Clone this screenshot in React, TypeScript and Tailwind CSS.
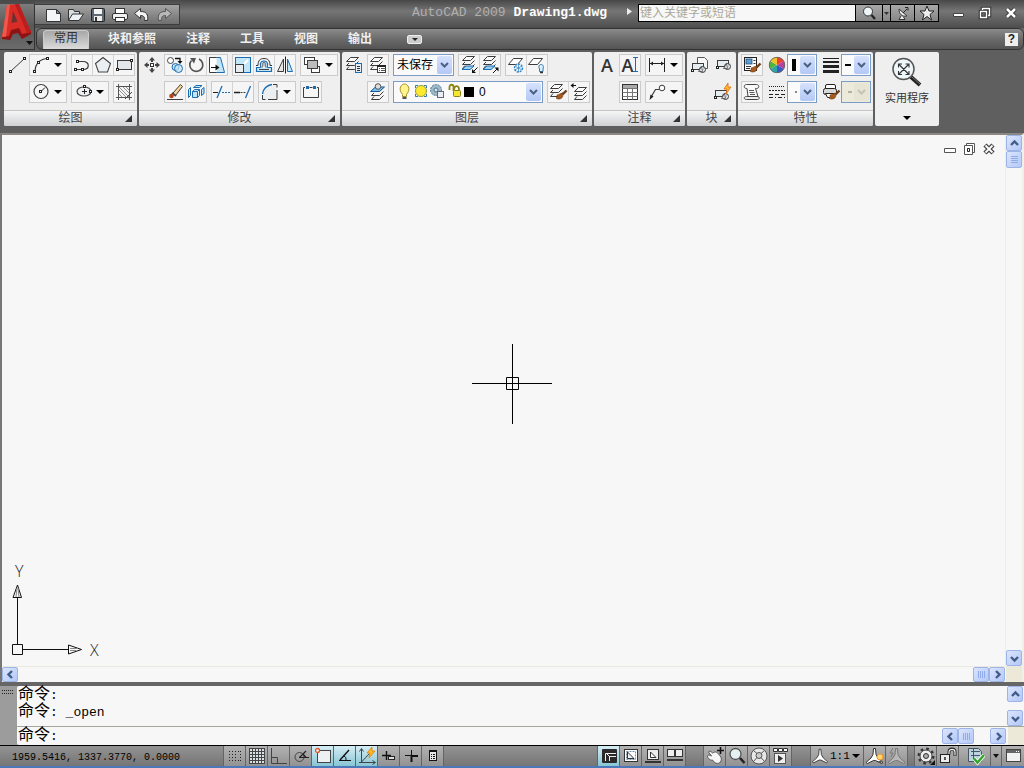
import React from 'react';
import clsx from 'clsx';

const D = '#3c3c3c';
const B = '#1c6cb4';
const L = '#c3e6f7';

/* All ribbon drawings share a 20x20 box */
const Sheets = ({ x = 2, y = 2 }: { x?: number; y?: number }) => (
  <g transform={`translate(${x} ${y})`} fill="#fafafa" stroke={D} strokeWidth="1">
    <path d="M3 9.500L.5 12.500h8l4-4" fill="none" />
    <path d="M3 6L.5 8.500h8l4-4" fill="none" />
    <path d="M.5 4.500h8l4-4h-8z" />
  </g>
);

const Node = ({ x, y }: { x: number; y: number }) => (
  <rect x={Math.floor(x) - 0.5} y={Math.floor(y) - 0.5} width="2" height="2" fill="#fff" stroke="#222" strokeWidth="1" />
);

const Brush = () => (
  <>
    <path d="M18.500 8.500l-4 4" stroke="#6b3f1c" strokeWidth="2.400" />
    <path d="M9 13c2 0 3-2 5-1.500c1.500 1.500 1 4-1 5-2 1-4 .5-5-.5 1.500-.5 1-2 1-3z" fill="#a8591d" stroke="#6b3a10" strokeWidth=".6" />
  </>
);

const BlockShape = ({ x, y }: { x: number; y: number }) => (
  <g transform={`translate(${x} ${y})`} stroke={D} fill="#e6edf0">
    <rect x="1.500" y=".5" width="11" height="6" />
    <circle cx="11.500" cy="6.500" r="3" fill="#dde6ea" fillOpacity=".85" />
    <path d="M10.500 3.500L7.500 8.500h4z" fill="#fff" fillOpacity=".5" strokeWidth=".7" />
    <Node x={1.5} y={7} />
  </g>
);

const icons: Record<string, React.ReactNode> = {
  line: <><path d="M4 16L17 4" stroke={D} /><Node x={3} y={16} /><Node x={17} y={3} /></>,
  arc: <><path d="M5 16C5.500 9 9 4 18 3.500" stroke={D} strokeWidth="1.200" /><Node x={4} y={16} /><Node x={8} y={7} /><Node x={17} y={3} /></>,
  polyline: <><path d="M3 14.500h8c7 0 7-8 0-8H6" stroke={D} strokeWidth="1.200" /><Node x={3} y={14} /><Node x={10} y={14} /><Node x={5} y={6} /></>,
  polygon: <path d="M10 2.500l7.500 6-3 8.500h-9l-3-8.500z" fill="#eceff2" stroke="#444" strokeWidth="1.100" />,
  rect: <><rect x="3.500" y="5.500" width="14" height="9" fill="#e4e7ea" stroke={D} /><Node x={3} y={14} /><Node x={17} y={5} /></>,
  circle: <><circle cx="11" cy="9.500" r="7" fill="#f6f6f6" stroke="#444" strokeWidth="1.200" /><path d="M11 9.500L15 5.500" stroke="#222" /><Node x={10} y={9} /></>,
  ellipse: <><ellipse cx="12" cy="9.500" rx="7" ry="4.500" fill="#eef0f2" stroke="#444" strokeWidth="1.200" /><path d="M12.500 7v5M10 9.500h5" stroke="#222" /><Node x={18} y={9} /><Node x={12} y={4} /></>,
  hatch: <><path d="M4.500 2v16M15.500 2v16M2 4.500h16M2 15.500h16" stroke="#555" /><path d="M5 8l7 7M5 12l3 3M5 5l10 10M9 5l6 6M12 5l3 3" stroke="#777" strokeWidth=".8" /><path d="M11 17l7-7" stroke="#444" /></>,
  move: <g fill="#444"><path d="M10 2l3 3.500H7zM10 18l3-3.500H7zM2 10l3.500-3v6zM18 10l-3.500-3v6z" /><path d="M9 5h2v2H9zM9 13h2v2H9zM5 9h2v2H5zM13 9h2v2h-2z" /><rect x="8.500" y="8.500" width="3" height="3" fill="#fff" stroke="#333" /></g>,
  copy: <><circle cx="5.500" cy="5.500" r="3" fill="#fff" stroke="#444" /><path d="M10 3.500h5v4" stroke="#111" strokeWidth="1.300" /><path d="M12.500 6h5L15 9z" fill="#111" /><circle cx="10.500" cy="12" r="3.500" fill={L} stroke={B} /><circle cx="13.500" cy="13.500" r="4" fill={L} fillOpacity=".7" stroke={B} /></>,
  rotate: <><path d="M5.500 5.500a6.500 6.500 0 1 0 7.500-1.500" stroke="#555" strokeWidth="1.700" /><path d="M4 3h6l-2 5.500z" fill="#555" /></>,
  stretch: <><path d="M8 2.500h5.500l4 15H8z" fill={L} stroke={B} /><path d="M9.500 2.500h-7v15h7" fill="#fff" stroke={D} /><path d="M4 12.500h6" stroke="#111" /><path d="M8.500 9.500l4 3-4 3z" fill="#111" /></>,
  scale: <><rect x="2.500" y="2.500" width="15" height="15" fill={L} stroke={B} /><rect x="2.500" y="9.500" width="8" height="8" fill="#e9ecee" stroke={D} /><path d="M11 9l4-4" stroke="#fff" strokeWidth="2" /></>,
  offset: <><path d="M2.500 16.500h15v-4h-3.500c-1 0-.8-1-.5-2 1.500-6-8.500-6-7 0 .3 1 .5 2-.5 2H2.500z" fill={L} stroke={B} strokeWidth="1.200" /><path d="M5 14.500h10M8 12.500c1.500-1 .5-3.500 1-4.500.5-1 1.500-1 2 0 .5 1-.5 3.500 1 4.500" fill="#fff" stroke="#444" /><path d="M2 10.500h2c0-5 2-7 6-7s6 2 6 7h2" stroke="#333" /></>,
  mirror: <><path d="M8.500 4v12.500h-6z" fill="#e6e6e6" stroke={D} /><path d="M12.500 4v12.500h5z" fill={L} stroke={B} /><path d="M10.500 1.500v17" stroke="#222" /></>,
  order: <><rect x="3.500" y="2.500" width="10" height="7" fill="#fff" stroke={D} /><rect x="10.500" y="11.500" width="8" height="6" fill="#fff" stroke={D} /><rect x="6.500" y="5.500" width="10" height="8" fill="#bcbcbc" stroke={D} /></>,
  erase: <><path d="M2 17.500h16" stroke={D} /><path d="M8 11l7.500-8.500 2 2L10.500 13.500z" fill="#f2d5a5" stroke="#4d3a28" /><path d="M7 11l4 3" stroke="#444" strokeWidth="2" /><circle cx="6.500" cy="14" r="2.300" fill="#b5431e" /></>,
  explode: <g fill={L} stroke={B} strokeWidth="1"><path d="M2.500 7.500l2-2v8l-2 2zM7.500 5.500l2.500-2h6l-2.500 2zM15.500 7.500l2.500-2v6l-2.500 2z" /><path d="M6.500 9.500h5v6h-5zM6.500 9.500l2-2h5l-2 2M11.500 15.500l2-2v-6" /></g>,
  trim: <><path d="M1 10.500h5" stroke="#222" strokeWidth="1.200" /><path d="M5 16L10 4" stroke={B} strokeWidth="1.300" /><path d="M10 10.500h9" stroke={B} strokeWidth="1.200" strokeDasharray="2 1" /></>,
  extend: <><path d="M1 10.500h6" stroke="#222" strokeWidth="1.300" /><path d="M7.500 10.500h6" stroke={D} strokeDasharray="2 1" /><path d="M12.500 16l5-12" stroke={B} strokeWidth="1.300" /></>,
  fillet: <><path d="M3.500 17.500V13C4 7 8 3 14 2.500h4v15z" fill="#eceff1" /><path d="M3.500 12C4 7 8 3 13 2.500" stroke={B} strokeWidth="1.400" /><path d="M3.500 13v4.500h3M14 2.500h4v3M9 17.500h9V8" stroke={D} /></>,
  brk: <><path d="M4 5.500H2.500v10h15v-10H16M8.500 5.500h3" stroke={D} /><rect x="5" y="4" width="3" height="3" fill={B} /><rect x="12" y="4" width="3" height="3" fill={B} /></>,
  layerProps: <><Sheets x={1} y={2} /><rect x="10.500" y="8.500" width="6" height="9" fill="#e3f0fa" stroke={B} /><path d="M12 11.500h3M12 13.500h3M12 15.500h3" stroke="#333" /></>,
  layerStates: <><Sheets x={2} y={2} /><rect x="9.500" y="10.500" width="8" height="7" fill="#fff" stroke={D} /><path d="M9 11h9" stroke="#222" strokeWidth="2" /><path d="M11 13.500h1M13 13.500h4M11 15.500h1M13 15.500h4" stroke="#555" /></>,
  layerIso: <><Sheets x={3} y={1} /><path d="M3 14.500h8l4-3.500H7z" fill="#9bd0f2" stroke={B} /><path d="M18.500 12.500l-4 4" stroke="#111" /><path d="M13 14v4h4z" fill="#111" /></>,
  layerUniso: <><Sheets x={3} y={1} /><path d="M3 14.500h8l4-3.500H7z" fill="#9bd0f2" stroke={B} /><path d="M13 18l4-4" stroke="#111" /><path d="M18.500 12.500h-4l4 4z" fill="#111" /></>,
  layerFreeze: <><path d="M2.500 9.500h9l5-6h-9z" fill="#fff" stroke={D} /><circle cx="12.500" cy="13" r="4" fill="#eaf6fd" stroke="#3183c5" strokeWidth="1.400" strokeDasharray="2 1" /><path d="M12.500 9v8M9 11l7 4M16 11l-7 4" stroke="#3183c5" strokeWidth=".7" /></>,
  layerOff: <><path d="M1.500 9.500h9l5-6h-9z" fill="#fff" stroke={D} /><path d="M12.500 14c-3-6 6-6 3.500 0v2.500h-3.500z" fill="#d8effc" stroke="#3778ad" /><path d="M13 17.500h3" stroke="#333" strokeWidth="1.300" /></>,
  layerCurrent: <><Sheets x={3} y={5} /><path d="M2.500 9.500h9l5-4.500h-9z" fill="#7cc0ee" stroke="#175a94" /><circle cx="10" cy="4.500" r="2.800" fill="#dcdcdc" stroke="#555" /></>,
  layerMatch: <><Sheets x={2} y={2} /><Brush /></>,
  layerPrev: <><Sheets x={5} y={5} /><path d="M2 3.500h5" stroke="#111" /><path d="M4.500 1v5L1.500 3.500z" fill="#111" /></>,
  dimLinear: <><path d="M3.500 3v14M18.500 3v14" stroke="#222" /><path d="M4 8.500h14" stroke="#222" /><path d="M4 8.500l3-2v4zM18 8.500l-3-2v4z" fill="#222" /></>,
  table: <><rect x="2.500" y="2.500" width="15" height="15" fill="#fff" stroke="#333" /><path d="M3 3h14v3H3z" fill="#aaa" /><path d="M2.500 6.500h15M2.500 10.500h15M2.500 14.500h15M7.500 7v10.500M12.500 7v10.500" stroke="#777" /></>,
  leader: <><path d="M5 15l4.500-7.500h4" stroke={D} strokeWidth="1.200" /><circle cx="16" cy="6" r="2.800" fill="#fff" stroke={D} /><path d="M3.500 18l1-5.500 3 2z" fill="#222" /></>,
  insertBlock: <><path d="M7.500 8.500v-6h7l3 3v8h-10z" fill="#f5f7f8" stroke="#555" /><BlockShape x={1} y={8} /></>,
  createBlock: <BlockShape x={3} y={5} />,
  editBlock: <><BlockShape x={1} y={8} /><path d="M15 1l-4 6h3l-1 5 5-7h-3z" fill="#ffbd27" stroke="#d9690f" strokeWidth=".8" /></>,
  matchProps: <><rect x="2.500" y="2.500" width="12" height="13" fill="#fff" stroke="#222" /><rect x="4" y="4" width="6" height="5" fill="#5c9ed0" stroke="#1f4d7a" strokeWidth=".8" /><path d="M11.500 5.500h2M11.500 8.500h2M4 11.500h5M4 13.500h4" stroke="#333" /><Brush /></>,
  list: <><path d="M4.500 2.500h10c3 0 3 4 0 4h-1l2.500 8H6L5 6.500H4.500c-3 0-3-4 0-4z" fill="#fafafa" stroke="#444" /><path d="M4.500 14.500H15c3 0 3 3 .5 3h-11c-3 0-3-3 0-3z" fill="#eee" stroke="#444" /><path d="M7 8.500h5M7.500 10.500h5M8 12.500h5" stroke="#555" /></>,
  linetypes: <g stroke="#222"><path d="M2 4.500h16" strokeDasharray="1 1" /><path d="M2 8.500h16" strokeDasharray="2 1" /><path d="M2 12.500h16" strokeDasharray="4 2" /><path d="M2 15.500h16" strokeDasharray="4 2 1 2" /></g>,
  lineweights: <g fill="#222"><rect x="2" y="3" width="16" height="1" /><rect x="2" y="6" width="16" height="2" /><rect x="2" y="10" width="16" height="3" /><rect x="2" y="15" width="16" height="3" /></g>,
  plotStyle: <><rect x="4.500" y="2.500" width="10" height="5" rx="1.500" fill="#fff" stroke="#222" /><rect x="2.500" y="6.500" width="13" height="6" rx="2" fill="#d8d8d8" stroke="#222" /><path d="M4.500 11.500h9v4h-7z" fill="#fff" stroke="#222" /><Brush /></>,
  color: (
    <>
      {['#f0402d', '#b93f9f', '#3957c4', '#2da7a6', '#53b43c', '#f3c12c'].map((c, i) => (
        <path key={c} d="M10 10L10 2A8 8 0 0 1 16.930 6z" fill={c} transform={`rotate(${i * 60} 10 10)`} />
      ))}
      <circle cx="10" cy="10" r="7.700" stroke="#666" strokeWidth=".9" />
    </>
  ),
};

function Icon({ name }: { name: string }) {
  return <svg width="20" height="20" viewBox="0 0 20 20" fill="none" className="shrink-0">{icons[name]}</svg>;
}

const Down = ({ className }: { className?: string }) => (
  <svg width="8" height="4" viewBox="0 0 8 4" className={clsx('shrink-0', className)}><path d="M0 0h8L4 4z" fill="currentColor" /></svg>
);

const LetterA = () => <span className="font-['Open_Sans',sans-serif] text-lg leading-5 font-semibold text-[#333]">A</span>;

function Tool({ name, label, className }: { name: string; label: string; className?: string }) {
  return (
    <button aria-label={label} className={clsx('box-content flex h-5 w-5 shrink-0 items-center justify-center', className)}>
      {name === 'mtext' ? (
        <>
          <LetterA />
          <svg width="5" height="16" className="shrink-0"><path d="M0 .5h5M0 14.500h5M2.500 1v13" stroke="#1c6cb4" /></svg>
        </>
      ) : <Icon name={name} />}
    </button>
  );
}

/* Framed set of buttons, optionally ending in a drop-down arrow */
function Group({ items, drop }: { items: [string, string][]; drop?: boolean }) {
  return (
    <div className={clsx('flex h-[22px] shrink-0 border border-[#cbcbcb] bg-[#f5f5f5]', !drop && 'divide-x divide-[#d4d4d4]')}>
      {items.map(([name, label]) => <Tool key={name} name={name} label={label} />)}
      {drop && (
        <button aria-label="更多" className="flex w-4 items-center justify-center text-black"><Down /></button>
      )}
    </div>
  );
}

function Select({ label, value, children, className, disabled }: {
  label: string; value: string; children?: React.ReactNode; className: string; disabled?: boolean;
}) {
  return (
    <div className={clsx('relative flex h-[22px] shrink-0 items-center border border-[#7a9cc6]', disabled ? 'bg-[#eceada]' : 'bg-[#fafafa]', className)}>
      {children}
      <select aria-label={label} disabled={disabled} defaultValue={value} className="h-full min-w-0 flex-1 appearance-none bg-transparent pl-[3px] text-xs text-black outline-none disabled:text-[#999]">
        <option>{value}</option>
      </select>
      <span className={clsx('pointer-events-none absolute inset-y-px right-px flex w-[15px] items-center justify-center rounded-xs', disabled ? 'bg-[#e6e4d3] text-[#c5c3b4]' : 'bg-linear-to-b from-[#d6e2fc] to-[#b3c8f6] text-[#4a6184]')}>
        <svg width="9" height="6" viewBox="0 0 9 6"><path d="M1 1l3.500 3.500L8 1" stroke="currentColor" strokeWidth="2" fill="none" /></svg>
      </span>
    </div>
  );
}

function Panel({ title, corner = true, className, children }: { title: string; corner?: boolean; className: string; children: React.ReactNode }) {
  return (
    <section className={clsx('flex shrink-0 flex-col overflow-hidden rounded-xs bg-[#efefef]', className)}>
      <div className="flex flex-1 flex-col gap-[5px] pt-0.5">{children}</div>
      <h2 className="relative h-4 border-t border-[#c4c4c4] bg-linear-to-b from-[#f6f6f6] to-[#cfd1d3] text-center text-xs leading-[15px] text-[#444]">
        {title}
        {corner && <svg width="7" height="7" className="absolute right-[5px] bottom-1"><path d="M7 0v7H0z" fill="#333" /></svg>}
      </h2>
    </section>
  );
}

const Row = ({ className, children }: { className?: string; children: React.ReactNode }) => (
  <div className={clsx('flex h-[22px] items-center', className)}>{children}</div>
);

function ScrollButton({ dir, className }: { dir: 'up' | 'down' | 'left' | 'right' | 'v' | 'h'; className?: string }) {
  const paths = { up: 'M4 9l3.500-3.500L11 9', down: 'M4 6l3.500 3.500L11 6', left: 'M9 4L5.500 7.500 9 11', right: 'M6 4l3.500 3.500L6 11', v: 'M4 4.500h7M4 6.500h7M4 8.500h7M4 10.500h7', h: 'M4.500 4v7M6.500 4v7M8.500 4v7M10.500 4v7' };
  const grip = dir === 'v' || dir === 'h';
  return (
    <button aria-label={dir} className={clsx('flex size-4 shrink-0 items-center justify-center rounded-xs border border-[#9db5e6] bg-linear-to-br from-[#dbe5fd] to-[#b4c8f7]', className)}>
      <svg width="15" height="15" viewBox="0 0 15 15" className="shrink-0"><path d={paths[dir]} fill="none" stroke={grip ? '#8fabea' : '#435d89'} strokeWidth={grip ? 1 : 2.4} /></svg>
    </button>
  );
}

const quick: [string, React.ReactNode][] = [
  ['新建', <path d="M1.500 3.500h10l4 4v8h-14zM11.500 3.500v4h4" fill="#f4f6f8" stroke="#333" />],
  ['打开', <><path d="M1.500 14V3.500h5l1 2h5v3" fill="#d6dce0" stroke="#333" /><path d="M1.500 14.500l4-6.500h11l-4.500 6.500z" fill="#eef2f4" stroke="#333" /></>],
  ['保存', <><rect x="2.500" y="2.500" width="13" height="13" rx="1" fill="#5d6872" stroke="#222" /><rect x="5" y="3" width="8" height="5" fill="#f4f4f4" /><rect x="5" y="10" width="8" height="5" fill="#eee" /><path d="M7 11v4" stroke="#333" strokeWidth="2" /></>],
  ['打印', <><rect x="4.500" y="2.500" width="9" height="5" fill="#fff" stroke="#333" /><rect x="1.500" y="7.500" width="15" height="6" rx="1.500" fill="#f1f1f1" stroke="#333" /><rect x="4.500" y="11.500" width="9" height="4" fill="#fff" stroke="#333" /></>],
  ['放弃', <path d="M1.500 7.500l6-5v3c6 0 8 3 7 9h-3c.5-3-.5-5-4-5v3z" fill="#f4f4f4" stroke="#333" />],
  ['重做', <path d="M16.500 7.500l-6-5v3c-6 0-8 3-7 9h3c-.5-3 .5-5 4-5v3z" fill="#b9b9b9" stroke="#555" />],
];

const toggles: [string, boolean, React.ReactNode][] = [
  ['捕捉模式', false, <path d="M4 5.500h10M4 8.500h7M4 11.500h7M4 14.500h10M15.500 5v10" stroke="#222" strokeDasharray="1 2" />],
  ['栅格显示', false, <><rect x="2.500" y="2.500" width="15" height="15" fill="#dce0e6" /><path d="M2.500 2v16M5.500 2v16M8.500 2v16M11.500 2v16M14.500 2v16M17.500 2v16M2 2.500h16M2 5.500h16M2 8.500h16M2 11.500h16M2 14.500h16M2 17.500h16" stroke="#444" /></>],
  ['正交模式', false, <path d="M2.500 2v15.500H18M2.500 11.500h6v6" stroke="#444" />],
  ['极轴追踪', false, <><circle cx="8.500" cy="11" r="4.500" stroke="#444" /><path d="M8.500 11.500L15 5M8 11.500h10M12 8l3 3.500" stroke="#222" strokeWidth="1.200" /></>],
  ['对象捕捉', true, <><rect x="4.500" y="4.500" width="13" height="12" fill="#eef1f3" stroke="#444" /><circle cx="4.500" cy="4.500" r="2" fill="#fff" stroke="#e65220" strokeWidth="1.300" /></>],
  ['对象追踪', true, <><path d="M4 14.500h12" stroke="#111" /><path d="M5 14L14 4" stroke="#111" strokeWidth="1.400" /><path d="M9 10c2 1 2 2 2 4.500" stroke="#111" /></>],
  ['动态UCS', true, <><path d="M4.500 3v14M2 16.500h16M4.500 16L12 8M2.500 5.500l2-3 2 3M15.500 14.500l3 2-3 2" stroke="#444" /><path d="M15 1l-5 6h3l-1 5 6-7h-3z" fill="#ffb91f" stroke="#e27c0c" strokeWidth=".8" /></>],
  ['动态输入', false, <><path d="M3 9.500h9M7.500 5v9" stroke="#111" strokeWidth="1.400" /><rect x="9.500" y="10.500" width="6" height="3" fill="#ddd" stroke="#222" /></>],
  ['线宽', false, <><path d="M4 9.500h6M10.500 4v6" stroke="#111" /><path d="M10 10h7M10.500 9v7" stroke="#111" strokeWidth="2" /></>],
  ['快捷特性', false, <><rect x="6.500" y="4.500" width="7" height="10" fill="#e6e6e6" stroke="#111" /><path d="M6 5h8" stroke="#111" strokeWidth="2" /><path d="M8 8.500h1M10 8.500h2M8 10.500h1M10 10.500h2M8 12.500h1M10 12.500h2" stroke="#111" /></>],
];

const layouts: [string, boolean, React.ReactNode][] = [
  ['模型', true, <><rect x="3" y="3" width="15" height="14" rx="1" fill="#2a2a2a" /><path d="M6.500 15V7.500H17M10.500 15v-4.500H17M7 7l4 4" stroke="#eee" /></>],
  ['布局', false, <><rect x="3.500" y="3.500" width="13" height="12" fill="#fff" stroke="#333" /><rect x="5.500" y="5.500" width="9" height="8" stroke="#6e8fa9" strokeDasharray="2 1" /><path d="M6.500 6v6.500H13z" fill="#eee" stroke="#333" /></>],
  ['快速查看布局', false, <><rect x="4.500" y="3.500" width="11" height="10" fill="#eee" stroke="#333" /><path d="M7.500 6v5.500H13z" fill="#fff" stroke="#333" /><path d="M2 16h16" stroke="#333" strokeWidth="2" /></>],
  ['快速查看图形', false, <><rect x="2.500" y="3.500" width="7" height="7" fill="#eee" stroke="#333" /><rect x="10.500" y="3.500" width="7" height="7" fill="#eee" stroke="#333" /><path d="M2 14h16" stroke="#333" strokeWidth="2" /></>],
];

const navs: [string, boolean, React.ReactNode][] = [
  ['平移', false, <><path d="M2.500 10c1-2 3 0 4 0L3.500 6c1-1.500 2-1 4 1 2-1 4-2 6 1 3 3 4 6 1 9-3 1-5 0-7-3-2 1-5-2-5-4z" fill="#f6f6f6" stroke="#555" /><path d="M15.500 1v7M12 4.500h7" stroke="#111" strokeWidth="1.600" /></>],
  ['缩放', false, <><circle cx="8.500" cy="8" r="5.500" fill="#e6eff2" stroke="#555" strokeWidth="1.300" /><path d="M13 12l4.500 5" stroke="#222" strokeWidth="2.600" /></>],
  ['控制盘', false, <><circle cx="10" cy="10" r="8" fill="#e8e8e8" stroke="#555" /><circle cx="10" cy="9.500" r="3" fill="#ccc" stroke="#555" /><path d="M4.500 4.500L8 7.500M15.500 4.500L12 7.500M4.500 15.500l3.500-4M15.500 15.500l-3.500-4" stroke="#555" /></>],
  ['运动显示器', false, <><path d="M2.500 2.500h4v3h-4zM7.500 2.500h4v3h-4zM12.500 2.500h4v3h-4z" fill="#fff" stroke="#333" /><rect x="3.500" y="7.500" width="11" height="10" fill="#eee" stroke="#555" /><path d="M7 9v7l5-3.500z" fill="#333" /></>],
];

const Scale = ({ c = '#333', f = '#fff' }: { c?: string; f?: string }) => (
  <path d="M8.500 2.500h2l.5 6 2 3.500 5 4.500-1.500 1-6-3h-2l-6 3-1.500-1 5-4.500 2-3.500z" fill={f} stroke={c} />
);

function StatusButton({ label, on, width = 'w-[22px]', children }: { label: string; on?: boolean; width?: string; children: React.ReactNode }) {
  return (
    <button aria-label={label} aria-pressed={!!on} className={clsx('flex h-full shrink-0 items-center justify-center border-l border-[#646464]', on ? 'bg-linear-to-b from-[#d5edf4] to-[#87c5d5]' : 'bg-linear-to-b from-[#b2b2b2] to-[#929292]', width)}>
      <svg width="20" height="20" viewBox="0 0 20 20" fill="none" className="shrink-0">{children}</svg>
    </button>
  );
}

const StatusSet = ({ items }: { items: [string, boolean, React.ReactNode][] }) => (
  <div className="flex h-full shrink-0 border-r border-[#646464]">
    {items.map(([label, on, art]) => <StatusButton key={label} label={label} on={on}>{art}</StatusButton>)}
  </div>
);

const boxBtn = 'flex h-full shrink-0 items-center justify-center border-l border-black bg-linear-to-b from-[#a8a8a8] to-[#868686]';

function Header() {
  return (
    <header className="flex h-[50px] shrink-0 bg-linear-to-b from-[#494949] via-[#686868] to-[#5f5f5f]">
      <button aria-label="菜单浏览器" className="mt-1 w-[35px] shrink-0 border-r border-b border-[#333] bg-linear-to-b from-[#7c7c7c] via-[#585858] to-[#6b6b6b]">
        <svg width="34" height="45" viewBox="0 0 34 45">
          <path d="M2 31l7-1 2-5 9-2 3 6 8-3v4l-9 5-4-6-5 1-3 6-8-1z" fill="#8f1313" />
          <path d="M7 1l12-1 12 28-9 2-3-6-8 2-2 6-7 1z" fill="#d92c26" />
          <path d="M19 0l12 28-4 1L15 .5z" fill="#b81f1d" />
          <path d="M7 1l3-.5L6 32.500l-4 .5z" fill="#f0584c" />
          <path d="M13 7l-1.500 12 6-1.500z" fill="#6b3030" />
          <path d="M26 37h7l-3.500 4z" fill="#111" />
        </svg>
      </button>
      <div className="flex min-w-0 flex-1 flex-col">
        <div className="flex h-7 items-start bg-linear-to-b from-[#484848] via-[#767676] via-40% to-[#4d4d4d] pt-1">
          <nav aria-label="快速访问" className="flex h-[21px] w-[145px] shrink-0 items-center gap-1 border border-l-0 border-[#3d3d3d] bg-linear-to-b from-[#a4a4a4] to-[#6f6f6f] pl-2.5">
            {quick.map(([label, art]) => (
              <button key={label} aria-label={label}><svg width="18" height="18" viewBox="0 0 18 18">{art}</svg></button>
            ))}
          </nav>
          <h1 className="flex-1 pr-1.5 text-right font-['Liberation_Mono',monospace] text-[13px] leading-[18px] whitespace-pre text-[#b0b0b0]">
            AutoCAD 2009 <b className="text-white">Drawing1.dwg</b>
            <svg width="5" height="8" className="ml-5 inline-block align-baseline"><path d="M0 0v7l5-3.500z" fill="#eee" /></svg>
          </h1>
          <div className="flex h-[18px] w-[301px] shrink-0 border border-black bg-[#f7f7f7]">
            <input aria-label="搜索" placeholder="键入关键字或短语" className="min-w-0 flex-1 px-px text-xs placeholder:text-[#aaa99a] outline-none" />
            <button aria-label="查找" className={clsx(boxBtn, 'w-[27px]')}>
              <svg width="16" height="16" viewBox="0 0 16 16"><circle cx="7" cy="6.500" r="4.500" fill="#eef5f7" stroke="#333" /><path d="M10.500 10l3.500 4" stroke="#222" strokeWidth="2.200" /></svg>
            </button>
            <button aria-label="查找选项" className={clsx(boxBtn, 'w-2')}>
              <svg width="5" height="3"><path d="M0 0h5L2.500 3z" fill="#333" /></svg>
            </button>
            <button aria-label="通讯中心" className={clsx(boxBtn, 'w-6')}>
              <svg width="16" height="16" viewBox="0 0 16 16"><path d="M4 4c0 5 3 8 8 7zM6 11l-2 3.500h6L8.500 12" fill="#eee" stroke="#333" /><path d="M8 8l4-4M10 2.500h3v3" stroke="#222" fill="none" /></svg>
            </button>
            <button aria-label="收藏夹" className={clsx(boxBtn, 'w-6')}>
              <svg width="16" height="16" viewBox="0 0 16 16"><path d="M8 1l2 5h5l-4 3.500 1.500 5.500L8 11.500 3.500 15 5 9.500 1 6h5z" fill="#eee" stroke="#222" /></svg>
            </button>
          </div>
          <div className="ml-3 flex w-[73px] shrink-0 gap-2.5 pt-px">
            <button aria-label="最小化"><svg width="16" height="16"><path d="M2.500 8.500h10v3h-10z" fill="#fff" stroke="#444" /></svg></button>
            <button aria-label="还原"><svg width="16" height="16" fill="none"><path d="M5.500 5V3.500h7v7H11M3.500 6.500h6v6h-6z" stroke="#333" strokeWidth="3.500" /><path d="M5.500 5V3.500h7v7H11M3.500 6.500h6v6h-6z" stroke="#fff" strokeWidth="1.400" /></svg></button>
            <button aria-label="关闭"><svg width="16" height="16"><path d="M4 4l8 8M12 4l-8 8" stroke="#333" strokeWidth="4.500" /><path d="M4 4l8 8M12 4l-8 8" stroke="#fff" strokeWidth="2.500" /></svg></button>
          </div>
        </div>
        <nav aria-label="功能区" className="ml-px flex h-[22px] items-stretch rounded-md border border-[#333] bg-linear-to-b from-[#8b8b8b] via-[#6b6b6b] to-[#545454] pl-0.5 text-xs text-white">
          <button className="mx-1 mt-px rounded-t-sm border border-b-0 border-[#ccc] bg-linear-to-b from-[#a7a7a7] to-[#dcdcdc] px-2.5 pb-1 leading-[15px] text-[#333]">常用</button>
          {['块和参照', '注释', '工具', '视图', '输出'].map(t => (
            <button key={t} className="px-[15px] leading-[18px] font-bold text-[#f0f0f0]">{t}</button>
          ))}
          <button aria-label="最小化功能区" className="ml-5 flex h-[9px] w-[15px] items-center justify-center self-center rounded-xs border border-[#eee] bg-[#ccc]">
            <svg width="6" height="3"><path d="M0 0h6L3 3z" fill="#222" /></svg>
          </button>
          <button aria-label="帮助" className="mr-[5px] ml-auto h-[13px] w-[13px] self-center bg-[#eee] text-center font-['Liberation_Sans',sans-serif] text-xs leading-[13px] font-bold text-[#222]">?</button>
        </nav>
      </div>
    </header>
  );
}

function Ribbon() {
  return (
    <div className="flex h-[83px] shrink-0 items-start gap-0.5 bg-[#5f5f5f] pt-0.5 pl-1 [&>section]:h-[74px]">
      <Panel title="绘图" className="w-[133px]">
        <Row className="gap-1 pl-[3px]">
          <Tool name="line" label="直线" className="-mr-0.5" />
          <Group items={[['arc', '圆弧']]} drop />
          <Group items={[['polyline', '多段线'], ['polygon', '正多边形'], ['rect', '矩形']]} />
        </Row>
        <Row className="gap-1 pl-[25px]">
          <Group items={[['circle', '圆']]} drop />
          <Group items={[['ellipse', '椭圆']]} drop />
          <Group items={[['hatch', '图案填充']]} />
        </Row>
      </Panel>
      <Panel title="修改" className="w-[201px]">
        <Row className="gap-1 pl-[3px]">
          <Tool name="move" label="移动" className="-mr-0.5" />
          <Group items={[['copy', '复制'], ['rotate', '旋转'], ['stretch', '拉伸']]} />
          <Group items={[['scale', '缩放'], ['offset', '偏移'], ['mirror', '镜像']]} />
          <Group items={[['order', '绘图次序']]} drop />
        </Row>
        <Row className="gap-1 pl-[25px]">
          <Group items={[['erase', '删除'], ['explode', '分解']]} />
          <Group items={[['trim', '修剪'], ['extend', '延伸']]} />
          <Group items={[['fillet', '圆角']]} drop />
          <Group items={[['brk', '打断']]} />
        </Row>
      </Panel>
      <Panel title="图层" className="w-[250px]">
        <Row className="gap-1 pl-[3px]">
          <Tool name="layerProps" label="图层特性" className="-mr-0.5" />
          <Group items={[['layerStates', '图层状态']]} />
          <Select label="图层状态" value="未保存" className="w-[61px]" />
          <Group items={[['layerIso', '隔离'], ['layerUniso', '取消隔离']]} />
          <Group items={[['layerFreeze', '冻结'], ['layerOff', '关闭']]} />
        </Row>
        <Row className="gap-1 pl-[25px]">
          <Group items={[['layerCurrent', '置为当前']]} />
          <Select label="图层" value="0" className="w-[150px]">
            <svg width="82" height="20" viewBox="0 0 82 20" className="shrink-0" fill="none">
              <path d="M8.500 12.500c-5-6-1-10.500 2-10.500s7 4.500 2 10.500v2h-4z" fill="#fff58c" stroke="#a88d2c" />
              <path d="M8.500 16h4" stroke="#555" strokeWidth="2" />
              <path d="M21.500 6V3.500H24M30 3.500h2.500V6M32.500 12v2.500H30M24 14.500h-2.500V12" stroke="#3a76a8" />
              <circle cx="27" cy="9" r="5.500" fill="#ffe92e" stroke="#8f9c42" />
              <circle cx="42" cy="8" r="5.500" fill="#9db9c8" stroke="#55788e" strokeDasharray="2 1" />
              <circle cx="42" cy="8" r="2" fill="#d7e5ee" stroke="#55788e" />
              <rect x="43.500" y="9.500" width="6" height="6" fill="#e8eef2" stroke="#667" />
              <path d="M55.500 8V5c0-3 4-3 4 0v4M60 8c0-5 5-5 5-1v2" stroke="#8b8415" strokeWidth="1.800" />
              <rect x="59.500" y="8.500" width="7" height="6" rx="1" fill="#f4e733" stroke="#8b8415" />
              <rect x="70" y="5" width="10" height="10" fill="#000" />
            </svg>
          </Select>
          <Group items={[['layerMatch', '匹配'], ['layerPrev', '上一个']]} />
        </Row>
      </Panel>
      <Panel title="注释" className="w-[91px]">
        <Row className="gap-1 pl-[3px]">
          <button aria-label="单行文字" className="-mr-0.5 flex h-5 w-5 justify-center"><LetterA /></button>
          <Group items={[['mtext', '多行文字']]} />
          <Group items={[['dimLinear', '线性']]} drop />
        </Row>
        <Row className="gap-1 pl-[25px]">
          <Group items={[['table', '表格']]} />
          <Group items={[['leader', '多重引线']]} drop />
        </Row>
      </Panel>
      <Panel title="块" className="w-[49px]">
        <Row className="justify-between px-[3px]">
          <Tool name="insertBlock" label="插入" />
          <Tool name="createBlock" label="创建" />
        </Row>
        <Row className="justify-end px-[3px]">
          <Tool name="editBlock" label="编辑" />
        </Row>
      </Panel>
      <Panel title="特性" corner={false} className="w-[135px]">
        <Row className="gap-1 pl-[3px]">
          <Group items={[['matchProps', '特性匹配']]} />
          <Tool name="color" label="颜色" className="-mr-1" />
          <Select label="对象颜色" value="" className="w-[30px]"><i className="ml-1 h-3 w-1 shrink-0 bg-black" /></Select>
          <Tool name="lineweights" label="线宽" />
          <Select label="对象线宽" value="" className="-ml-1 w-[30px]"><i className="ml-[3px] h-0.5 w-1.5 shrink-0 bg-black" /></Select>
        </Row>
        <Row className="gap-1 pl-[3px]">
          <Group items={[['list', '列表']]} />
          <Tool name="linetypes" label="线型" className="-mr-1" />
          <Select label="对象线型" value="" className="w-[30px]"><i className="ml-[7px] size-0.5 shrink-0 bg-[#888]" /></Select>
          <Tool name="plotStyle" label="打印样式" />
          <Select label="对象打印样式" value="" disabled className="-ml-1 w-[30px]"><i className="ml-1.5 h-0.5 w-1 shrink-0 bg-[#b5b39f]" /></Select>
        </Row>
      </Panel>
      <button className="flex h-[74px] w-16 shrink-0 flex-col items-center rounded-xs bg-[#efefef] text-[11px] leading-4 text-[#333]">
        <svg width="32" height="32" viewBox="0 0 32 32" className="mt-1 mb-0.5 shrink-0" fill="none">
          <path d="M20 21l9 8" stroke="#222" strokeWidth="4" />
          <path d="M21 21l8 7" stroke="#777" />
          <circle cx="12.500" cy="13" r="10.500" fill="#f0f7fa" stroke="#555" strokeWidth="1.500" />
          <path d="M8 8.500l9.500 9.500M17.500 8.500L8 18M7.500 11.500v-3.500H11M14.500 8H18v3.500M18 15v3.500h-3.500M11 18.500H7.500V15" stroke="#333" strokeWidth="1.100" />
        </svg>
        实用程序
        <Down className="mt-2.5 text-black" />
      </button>
    </div>
  );
}

function Canvas() {
  return (
    <main className="flex min-h-0 flex-1 flex-col border-t-2 border-r-2 border-l-2 border-t-[#8a8785] border-r-[#f0f0ea] border-l-[#777] bg-[#f7f7f7]">
      <div className="flex min-h-0 flex-1">
        <div className="relative flex-1 overflow-hidden">
          <svg width="80" height="80" className="absolute top-[209px] left-[470px]" fill="none" stroke="#000">
            <path d="M40.500 0v80M0 39.500h80M34.500 33.500h12v12h-12z" />
          </svg>
          <svg width="120" height="108" viewBox="0 0 120 108" className="absolute bottom-0 left-1.5" fill="none" stroke="#111">
            <path d="M9.500 86V40M15 91.500h45M4.500 86.500h10v10h-10zM5 39.500L9.500 27l4 12.500zM60.500 87v9l13-4.500z" />
            <path d="M9 30l-1 9M10 30l1 9M62 90.500h8M62 92.500h6" stroke="#888" />
            <g fill="#222" stroke="none" className="font-['Open_Sans',sans-serif] text-base font-light">
              <text x="7" y="19">Y</text>
              <text x="82" y="98">X</text>
            </g>
          </svg>
          <div className="absolute top-[7px] right-2 flex gap-1">
            <button aria-label="最小化图形"><svg width="16" height="14"><path d="M3.500 6.500h11v4h-11z" fill="#fff" stroke="#555" /></svg></button>
            <button aria-label="还原图形"><svg width="16" height="14" fill="none" stroke="#555"><path d="M5.500 3.500v-2h8v9h-2M3.500 3.500h8v9h-8z" fill="#fff" /><path d="M6.500 6.500h2v3h-2z" stroke="#222" /></svg></button>
            <button aria-label="关闭图形"><svg width="16" height="14" fill="none"><path d="M4 3l8 8M12 3l-8 8" stroke="#444" strokeWidth="4.500" /><path d="M4.500 3.500l7 7M11.500 3.500l-7 7" stroke="#fff" strokeWidth="1.800" /></svg></button>
          </div>
        </div>
        <div className="flex w-[17px] flex-col border-l border-[#ececec]">
          <ScrollButton dir="up" />
          <ScrollButton dir="v" className="h-[17px]" />
          <ScrollButton dir="down" className="mt-auto" />
        </div>
      </div>
      <div className="flex h-4 border-t border-[#ece9e0]">
        <ScrollButton dir="left" className="h-[15px]" />
        <ScrollButton dir="h" className="ml-auto h-[15px]" />
        <ScrollButton dir="right" className="mr-px h-[15px]" />
        <div className="w-4 bg-[#ece9d8]" />
      </div>
    </main>
  );
}

const Prompt = () => <span className="text-base leading-[17px]">命令</span>;

function CommandLine() {
  return (
    <div className="flex h-[63px] shrink-0 border-t-4 border-[#666] bg-[#9c9c9c] font-['Liberation_Mono','Noto_Sans_CJK_SC',monospace] text-[13px] leading-[17px] text-black">
      <svg width="17" height="59" className="shrink-0"><path d="M2 4.500h12M2 7.500h12" stroke="#222" strokeDasharray="1 1" /></svg>
      <div className="flex flex-1 flex-col rounded-l-xs bg-[#f7f7f7]">
        <div className="flex h-[41px] border-b border-[#a5a59b]">
          <div className="flex-1 pt-px pl-px">
            <p className="h-[17px]"><Prompt />:</p>
            <p className="h-[17px]"><Prompt />: _open</p>
          </div>
          <div className="flex w-[17px] flex-col justify-between">
            <ScrollButton dir="up" />
            <ScrollButton dir="down" />
          </div>
        </div>
        <div className="flex flex-1 items-center">
          <label htmlFor="cmd" className="pt-px pl-px"><Prompt />:</label>
          <input id="cmd" className="ml-1 min-w-0 flex-1 outline-none" />
          <ScrollButton dir="left" />
          <ScrollButton dir="h" />
          <ScrollButton dir="right" className="mr-0.5 ml-4" />
          <div className="h-full w-4 bg-[#ece9d8]" />
        </div>
      </div>
    </div>
  );
}

function StatusBar() {
  return (
    <footer className="flex h-[23px] shrink-0 items-stretch border-t border-b-2 border-t-black border-b-[#4a78b8] bg-linear-to-b from-[#939393] to-[#757575]">
      <p className="w-[223px] shrink-0 pt-[3px] pl-3 font-['Liberation_Mono',monospace] text-[10px] leading-[18px] text-black">1959.5416, 1337.3770, 0.0000</p>
      <StatusSet items={toggles} />
      <div className="flex-1" />
      <StatusSet items={layouts} />
      <div className="w-[17px]" />
      <StatusSet items={navs} />
      <div className="w-[18px]" />
      <div className="flex shrink-0 border-r border-[#646464]">
        <button aria-label="注释比例" className="flex w-[53px] items-center border-l border-[#646464] bg-linear-to-b from-[#b2b2b2] to-[#929292] font-['Liberation_Mono',monospace] text-[11px] text-black">
          <svg width="19" height="18" viewBox="0 0 20 20" className="shrink-0"><Scale /></svg>1:1<Down className="ml-0.5" />
        </button>
        <StatusButton label="注释可见性"><Scale /><circle cx="15" cy="11" r="3" fill="#ffd873" stroke="#f2931e" /><path d="M13.500 16h3" stroke="#555" strokeWidth="2" /></StatusButton>
        <StatusButton label="自动添加比例"><Scale c="#777" f="#b8b8b8" /><path d="M6 2L3 7h3l-2 4" stroke="#777" /></StatusButton>
      </div>
      <div className="w-1.5" />
      <StatusButton label="切换工作空间">
        <circle cx="10" cy="10" r="7" stroke="#333" strokeWidth="3" strokeDasharray="2.500 3" />
        <circle cx="10" cy="10" r="6" fill="#eee" stroke="#444" /><circle cx="10" cy="10" r="2.500" fill="#aaa" stroke="#333" />
        <path d="M19 14v5h-5z" fill="#111" />
      </StatusButton>
      <StatusButton label="锁定"><rect x="2.500" y="8.500" width="9" height="8" fill="#eee" stroke="#222" /><path d="M11 8.500V6c0-4 6-4 6 0v4" stroke="#222" strokeWidth="3" /><path d="M11 8V6c0-3.500 6-3.500 6 0v3.500" stroke="#eee" strokeWidth="1.200" /><path d="M7 11v3" stroke="#222" strokeWidth="1.500" /></StatusButton>
      <StatusButton label="CAD标准" width="w-8">
        <path d="M3.500 2.500h10l3 3v10h-13z" fill="#bcd3de" stroke="#456" /><path d="M6 5.500h9M6 9.500h9M8.500 3v12" stroke="#456" /><path d="M9 12.500l3.500 4L19 9" stroke="#fff" strokeWidth="4" /><path d="M9 12.500l3.500 4L19 9" stroke="#35a52a" strokeWidth="2.500" />
      </StatusButton>
      <button aria-label="状态栏菜单" className="flex w-[11px] shrink-0 items-center justify-center border-l border-[#646464] bg-linear-to-b from-[#b2b2b2] to-[#929292]">
        <svg width="6" height="4"><path d="M0 0h6L3 4z" fill="#111" /></svg>
      </button>
      <StatusButton label="全屏显示" width="w-[23px]"><rect x="3.500" y="3.500" width="14" height="12" fill="#f1f1f1" stroke="#444" /><path d="M4 5.500h13" stroke="#666" strokeWidth="3" /><path d="M13 5.500h1M15 5.500h1" stroke="#fff" /></StatusButton>
    </footer>
  );
}

export default function App() {
  return (
    <div className="flex h-screen min-w-[960px] flex-col overflow-hidden bg-[#5f5f5f] font-['Liberation_Sans','Noto_Sans_CJK_SC',sans-serif]">
      <Header />
      <Ribbon />
      <Canvas />
      <CommandLine />
      <StatusBar />
    </div>
  );
}
